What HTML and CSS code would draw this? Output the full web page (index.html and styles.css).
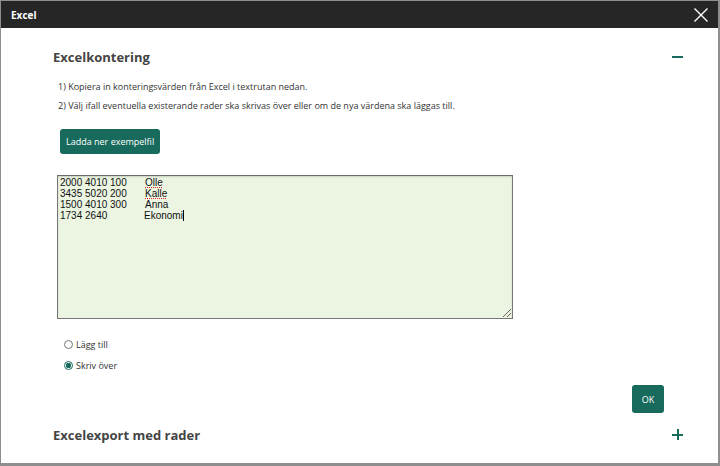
FILE: index.html
```html
<!DOCTYPE html>
<html lang="sv">
<head>
    <meta charset="UTF-8">
    <meta name="viewport" content="width=device-width, initial-scale=1.0">
    <title>Excel</title>
<link rel="stylesheet" href="styles.css">
</head>
<body>
<div class="modal">
    <div class="modal-head">
        <span class="modal-title">Excel</span>
        <button class="close-btn" type="button" aria-label="Stäng">
            <svg width="16" height="16" viewBox="0 0 16 16"><path d="M1.5 1.5 L14.5 14.5 M14.5 1.5 L1.5 14.5" stroke="#fff" stroke-width="1.4" fill="none"/></svg>
        </button>
    </div>

    <div class="modal-body">
        <!-- Import section -->
        <div class="section">
            <div class="section-head">
                <h3>Excelkontering</h3>
                <span class="toggle minus"></span>
            </div>
            <div class="section-content">
                <p class="info">1) Kopiera in konteringsvärden från Excel i textrutan nedan.</p>
                <p class="info">2) Välj ifall eventuella existerande rader ska skrivas över eller om de nya värdena ska läggas till.</p>
                <button class="btn" type="button">Ladda ner exempelfil</button>

                <div class="paste-box">
                    <div class="row"><span class="col">2000 4010 100</span><span class="spell">Olle</span></div>
                    <div class="row"><span class="col">3435 5020 200</span><span class="spell">Kalle</span></div>
                    <div class="row"><span class="col">1500 4010 300</span><span>Anna</span></div>
                    <div class="row"><span class="col short">1734 2640</span><span>Ekonomi</span><span class="caret"></span></div>
                    <span class="grip"></span>
                </div>

                <label class="radio"><span class="dot"></span>Lägg till</label>
                <label class="radio"><span class="dot checked"></span>Skriv över</label>

                <div class="actions">
                    <button class="btn ok" type="button">OK</button>
                </div>
            </div>
        </div>

        <!-- Export section -->
        <div class="section-head">
            <h3>Excelexport med rader</h3>
            <span class="toggle plus"></span>
        </div>
    </div>
</div>
</body>
</html>
```

FILE: styles.css
```css
:root {
  --teal: #176a5c;
  --text: #333;
  --head: #444;
}

body {
  margin: 0;
  height: 466px;
  overflow: hidden;
  background-color: #8e8e8e;
  font-family: "Open Sans", sans-serif;
}

.modal {
  margin: 1px 2px 0 1px;
  height: 462px;
  background: #fff;
  display: flex;
  flex-direction: column;
}

/* Header bar */
.modal-head {
  height: 27px;
  background: #262626;
  display: flex;
  align-items: center;
  justify-content: space-between;
  padding: 0 9px 0 10px;
}
.modal-title {
  color: #fff;
  font-size: 10px;
  font-weight: 700;
}
.close-btn {
  background: none;
  border: none;
  padding: 0;
  width: 16px;
  height: 16px;
  display: flex;
}

.modal-body {
  padding: 20px 34px 0 52px;
}

.section-head {
  display: flex;
  justify-content: space-between;
  align-items: center;
  height: 17px;
}
.section-head h3 {
  margin: 0;
  font-size: 13px;
  font-weight: 700;
  color: var(--head);
}

/* plus / minus toggles */
.toggle {
  position: relative;
  width: 11px;
  height: 11px;
}
.toggle::before,
.toggle.plus::after {
  content: "";
  position: absolute;
  background: var(--teal);
}
.toggle::before {
  left: 0;
  right: 0;
  top: 5px;
  height: 2px;
}
.toggle.minus { margin-right: 1px; }
.toggle.plus { margin-right: 1px; width: 11px; }
.toggle.plus::after {
  top: 0;
  bottom: 0;
  left: 4.5px;
  width: 2px;
}

.section-content {
  padding: 16px 0 0 5px;
}
.info {
  margin: 0 0 7px;
  font-size: 9px;
  line-height: 12px;
  color: var(--text);
}

.btn {
  background: var(--teal);
  color: #fff;
  border: none;
  border-radius: 3px;
  font-family: "Open Sans", sans-serif;
  font-size: 9px;
  cursor: pointer;
}
.section-content > .btn {
  margin: 10px 0 0 2px;
  height: 25px;
  padding: 0 6px;
}

/* pasted values */
.paste-box {
  position: relative;
  margin: 21px 0 0 -1px;
  width: 450px;
  height: 140px;
  border: 1px solid #777;
  border-top-color: #6a6a6a;
  box-shadow: inset 0 1px 2px rgba(0, 0, 0, 0.15);
  background: #ebf5e2;
  padding: 1px 2px;
  font-family: "Liberation Sans", Arial, sans-serif;
  font-size: 10px;
  line-height: 11px;
  color: #111;
}
.row {
  display: flex;
  align-items: center;
  height: 11px;
}
.col {
  width: 85px;
  flex-shrink: 0;
}
.col.short { width: 84px; }
/* spellcheck squiggle under unknown names */
.spell {
  display: inline-block;
  height: 11px;
  line-height: 11px;
  background: repeating-linear-gradient(90deg, #e02020 0 1px, transparent 1px 2px) left bottom / 100% 1px no-repeat;
}
.caret {
  width: 1px;
  height: 11px;
  background: #000;
}
.grip {
  position: absolute;
  right: 1px;
  bottom: 1px;
  width: 8px;
  height: 8px;
  background: linear-gradient(135deg, transparent 45%, #666 45%, #666 52%, transparent 52%, transparent 70%, #666 70%, #666 77%, transparent 77%);
}

/* radio choices */
.radio {
  display: flex;
  align-items: center;
  gap: 3px;
  font-size: 9px;
  color: var(--text);
  margin-left: 6px;
  height: 12px;
}
.paste-box + .radio { margin-top: 19px; }
.radio + .radio { margin-top: 9px; }
.dot {
  width: 7px;
  height: 7px;
  border: 1px solid #777;
  border-radius: 50%;
  background: #fff;
}
.dot.checked {
  border-color: var(--teal);
  background: radial-gradient(circle, var(--teal) 0 2.5px, #fff 3px);
}

.actions {
  display: flex;
  justify-content: flex-end;
  padding-right: 20px;
  margin-top: 14px;
}
.btn.ok {
  width: 32px;
  height: 28px;
  padding: 0;
}

.section + .section-head {
  margin-top: 13px;
}
```
